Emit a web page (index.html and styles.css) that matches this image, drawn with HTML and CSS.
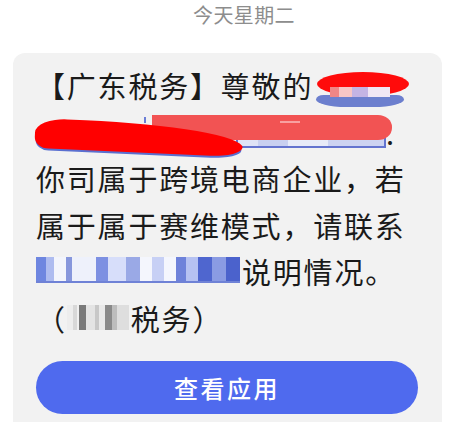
FILE: index.html
```html
<!DOCTYPE html>
<html lang="zh-CN">
<head>
<meta charset="utf-8">
<title>短信</title>
<link rel="stylesheet" href="styles.css">
</head>
<body>
<div class="date">今天星期二</div>
<div class="card">
  <div class="msg">
    <div class="line">【广东税务】尊敬的<span class="r1"><span class="r1-blue"></span><span class="r1-red"></span><span class="r1-pix"></span></span></div>
    <div class="line l2"><span class="hidden-link"><span class="hl-blue"></span><span class="blob-salmon"><span class="salmon-mark"></span></span><span class="blob-red"></span><span class="tick"></span></span>.</div>
    <div class="line">你司属于跨境电商企业，若</div>
    <div class="line">属于属于赛维模式，请联系</div>
    <div class="line"><span class="phone"></span>说明情况。</div>
    <div class="line">（<span class="mosaic"></span>税务）</div>
  </div>
  <button class="btn">查看应用</button>
</div>
</body>
</html>
```

FILE: styles.css
```css
html, body {
  margin: 0;
  padding: 0;
  background: #ffffff;
  overflow: hidden;
  height: 422px;
}

body {
  font-family: "Noto Sans CJK SC", "Noto Sans", sans-serif;
}

.date {
  height: 28px;
  padding-top: 1px;
  padding-left: 20px;
  font-size: 20px;
  line-height: 28px;
  text-align: center;
  color: #8d8d8d;
  letter-spacing: 0.4px;
}

.card {
  margin: 24px 0 0 13px;
  width: 429px;
  height: 369px;
  box-sizing: border-box;
  background: #f2f2f2;
  border-radius: 12px 12px 0 0;
  padding: 9px 24px 0 23px;
}

.msg {
  font-size: 29px;
  line-height: 46.6px;
  letter-spacing: 1.8px;
  color: #1a1a1a;
}

.line {
  white-space: nowrap;
  height: 46.6px;
  display: flex;
  align-items: flex-start;
}

/* line 1 redaction */
.r1 {
  position: relative;
  display: inline-block;
  width: 94px;
  height: 46px;
  margin-left: 3px;
}
.r1-blue {
  position: absolute;
  left: 0;
  top: 33px;
  width: 88px;
  height: 12px;
  background: #6c7fce;
  border-radius: 10px 10px 40px 40px / 6px 6px 10px 10px;
}
.r1-red {
  position: absolute;
  left: 1px;
  top: 10px;
  width: 92px;
  height: 24px;
  background: #ff0b0b;
  border-radius: 50% / 50%;
}
.r1-pix {
  position: absolute;
  left: 14px;
  top: 25px;
  width: 60px;
  height: 10px;
  background: linear-gradient(90deg,
    #f08686 0 9px, #f7c6c6 9px 22px, #c4b4e4 22px 38px, #f0e6f4 38px 60px);
}

/* line 2 redaction */
.hidden-link {
  position: relative;
  display: inline-block;
  width: 350px;
  height: 46px;
}
.hl-blue {
  position: absolute;
  left: 200px;
  top: 27px;
  width: 146px;
  height: 10px;
  border: 2px solid #6474cf;
  border-top: none;
  background: linear-gradient(90deg, #dfe3f6 0 20px, #c9d0f0 20px 50px, #e8ebf8 50px 90px, #cdd3f1 90px 146px);
}
.blob-salmon {
  position: absolute;
  left: 116px;
  top: 6px;
  width: 240px;
  height: 25px;
  background: #f25353;
  border-radius: 0 14px 14px 0 / 0 12px 12px 0;
}
.salmon-mark {
  position: absolute;
  left: 128px;
  top: 6px;
  width: 20px;
  height: 2px;
  background: #f8a0a0;
}
.blob-red {
  position: absolute;
  left: -1px;
  top: 9px;
  width: 208px;
  height: 30px;
  background: #ff0000;
  border-radius: 40px 200px 40px 18px / 18px 26px 12px 14px;
  transform: rotate(2.5deg);
  transform-origin: left center;
  box-shadow: 0 3px 0 -1px #5a6fd0;
}
.tick {
  position: absolute;
  left: 108px;
  top: 8px;
  width: 2px;
  height: 6px;
  background: #6b7ed6;
}

/* phone mosaic */
.phone {
  display: inline-block;
  width: 204px;
  height: 26px;
  margin-top: 9px;
  margin-right: 2px;
  border-bottom: 2px solid #6f82d6;
  box-sizing: border-box;
  background: linear-gradient(90deg,
      #6e86e0 0 10px, #aebcf0 10px 18px, #f3f5fc 18px 30px, #8797dc 30px 36px,
      #eef1fb 36px 60px, #7d90e2 60px 72px, #d7defa 72px 90px, #9aa9e6 90px 104px,
      #f4f6fd 104px 116px, #c7d0f5 116px 128px, #f4f6fd 128px 140px, #6e82da 140px 150px,
      #b6c2f2 150px 162px, #4f66cf 162px 176px, #8a9be3 176px 190px, #4b62cc 190px 204px);
}

/* agency mosaic */
.mosaic {
  display: inline-block;
  width: 62px;
  height: 25px;
  margin-top: 10px;
  margin-right: 2px;
  background: linear-gradient(90deg,
    #ededed 0 6px, #d8d8d8 6px 10px, #f0f0f0 10px 12px, #7a7a7a 12px 19px,
    #e4e4e4 19px 28px, #c8c8c8 28px 32px, #e9e9e9 32px 38px, #8a8a8a 38px 45px,
    #bdbdbd 45px 50px, #dedede 50px 62px);
}

.btn {
  display: block;
  margin-top: 19px;
  width: 382px;
  height: 53px;
  border: none;
  border-radius: 27px;
  background: #4f6aee;
  color: #ffffff;
  font-family: "Noto Sans CJK SC", "Noto Sans", sans-serif;
  font-size: 24px;
  font-weight: 500;
  letter-spacing: 2.5px;
  padding: 0;
  cursor: pointer;
}
```
